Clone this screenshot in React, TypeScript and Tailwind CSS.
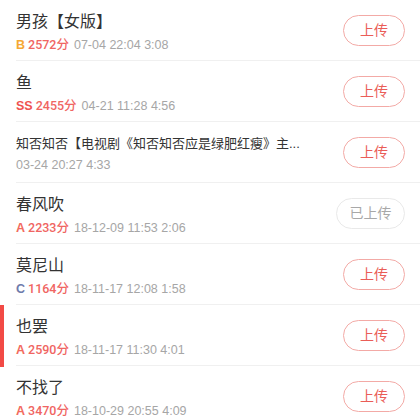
import React from 'react'

type Song = {
  title: string
  small?: boolean
  level?: string
  score?: string
  meta: string
  uploaded?: boolean
  active?: boolean
}

const songs: Song[] = [
  { title: '男孩【女版】', level: 'B', score: '2572分', meta: '07-04 22:04 3:08' },
  { title: '鱼', level: 'SS', score: '2455分', meta: '04-21 11:28 4:56' },
  { title: '知否知否【电视剧《知否知否应是绿肥红瘦》主...', small: true, meta: '03-24 20:27 4:33' },
  { title: '春风吹', level: 'A', score: '2233分', meta: '18-12-09 11:53 2:06', uploaded: true },
  { title: '莫尼山', level: 'C', score: '1164分', meta: '18-11-17 12:08 1:58' },
  { title: '也罢', level: 'A', score: '2590分', meta: '18-11-17 11:30 4:01', active: true },
  { title: '不找了', level: 'A', score: '3470分', meta: '18-10-29 20:55 4:09' },
]

const levelColor: Record<string, string> = {
  B: 'text-[#f5a833]',
  SS: 'text-[#ef5350]',
  A: 'text-[#f26b5e]',
  C: 'text-[#6f7bab]',
}

function SongRow({ song }: { song: Song }) {
  return (
    <div className="relative h-[61px] pl-4">
      {/* selected marker */}
      {song.active && <div className="absolute left-0 top-0 h-[62px] w-[4px] bg-[#f24a45]" />}
      <div className="flex h-full items-center border-b border-[#f0f0f0] pr-[15px]">
        <div className="min-w-0 flex-1 pt-[4px]">
          <div
            className={
              song.small
                ? 'whitespace-nowrap text-[13px] leading-[18px] text-[#333]'
                : 'whitespace-nowrap text-[16px] leading-[22px] text-[#333]'
            }
          >
            {song.title}
          </div>
          <div className={`flex items-center text-[12.5px] leading-[18px] ${song.small ? 'mt-[3px]' : 'mt-[3px]'}`}>
            {song.level && (
              <span className={`mr-[3px] font-bold ${levelColor[song.level]}`}>{song.level}</span>
            )}
            {song.score && (
              <span className="mr-[5px] font-medium text-[#f06562]" style={{ fontFamily: 'Roboto, "Noto Sans CJK SC", sans-serif' }}>
                {song.score}
              </span>
            )}
            <span className="text-[#a6a6a6]">{song.meta}</span>
          </div>
        </div>
        {song.uploaded ? (
          <button className="flex h-[31px] w-[69px] items-center justify-center rounded-full border border-[#e9e9e9] text-[14px] text-[#a8a8a8]">
            已上传
          </button>
        ) : (
          <button className="flex h-[31px] w-[62px] items-center justify-center rounded-full border border-[#f3aaa6] text-[14px] text-[#ea5d57]">
            上传
          </button>
        )}
      </div>
    </div>
  )
}

export default function App() {
  return (
    <div
      className="h-[420px] w-[420px] overflow-hidden bg-white"
      style={{ fontFamily: '"Liberation Sans", "Noto Sans CJK SC", sans-serif' }}
    >
      {songs.map(song => (
        <SongRow key={song.title} song={song} />
      ))}
    </div>
  )
}
